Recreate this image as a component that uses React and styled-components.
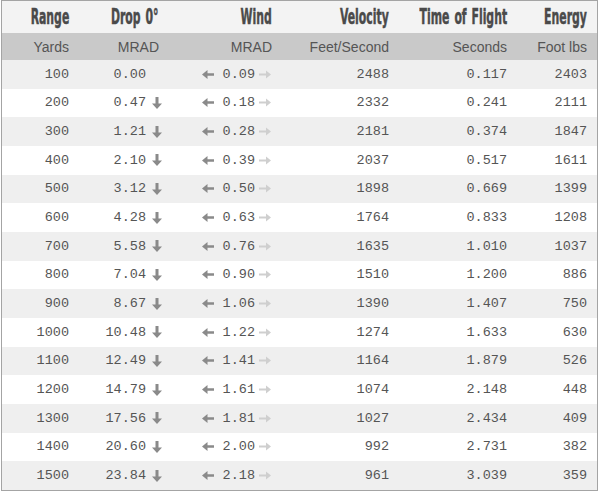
import React from 'react'
import styled, { createGlobalStyle } from 'styled-components'

const rows = [
  [100, '0.00', '0.09', 2488, '0.117', 2403],
  [200, '0.47', '0.18', 2332, '0.241', 2111],
  [300, '1.21', '0.28', 2181, '0.374', 1847],
  [400, '2.10', '0.39', 2037, '0.517', 1611],
  [500, '3.12', '0.50', 1898, '0.669', 1399],
  [600, '4.28', '0.63', 1764, '0.833', 1208],
  [700, '5.58', '0.76', 1635, '1.010', 1037],
  [800, '7.04', '0.90', 1510, '1.200', 886],
  [900, '8.67', '1.06', 1390, '1.407', 750],
  [1000, '10.48', '1.22', 1274, '1.633', 630],
  [1100, '12.49', '1.41', 1164, '1.879', 526],
  [1200, '14.79', '1.61', 1074, '2.148', 448],
  [1300, '17.56', '1.81', 1027, '2.434', 409],
  [1400, '20.60', '2.00', 992, '2.731', 382],
  [1500, '23.84', '2.18', 961, '3.039', 359],
]

const titles = ['Range', 'Drop 0°', 'Wind', 'Velocity', 'Time of Flight', 'Energy']
const units = ['Yards', 'MRAD', 'MRAD', 'Feet/Second', 'Seconds', 'Foot lbs']

function DownArrow() {
  return (
    <svg width="10" height="12" viewBox="0 0 10 12">
      <path d="M3.5 0h3v6.5H10L5 12 0 6.5h3.5z" fill="#8a8a8a" />
    </svg>
  )
}

function LeftArrow() {
  return (
    <svg width="12" height="9" viewBox="0 0 12 9">
      <path d="M12 3.2v2.6H5.5V9L0 4.5 5.5 0v3.2z" fill="#8a8a8a" />
    </svg>
  )
}

function RightArrow() {
  return (
    <svg width="12" height="9" viewBox="0 0 12 9">
      <path d="M0 3.5v2H7V8.5L12 4.5 7 0.5v3z" fill="#cfcfcf" />
    </svg>
  )
}

function App() {
  return (
    <>
      <GlobalStyle />
      <Table>
        <TitleRow>
          {titles.map((t) => (
            <Title key={t}><Squeeze>{t}</Squeeze></Title>
          ))}
        </TitleRow>
        <UnitRow>
          {units.map((u, i) => (
            <Unit key={i}>{u}</Unit>
          ))}
        </UnitRow>
        {rows.map((r, i) => (
          <DataRow key={r[0]} $odd={i % 2 === 0}>
            <Cell>{r[0]}</Cell>
            <DropCell>
              <span>{r[1]}</span>
              <ArrowSlot>{i > 0 && <DownArrow />}</ArrowSlot>
            </DropCell>
            <WindCell>
              <LeftArrow />
              <WindValue>{r[2]}</WindValue>
              <RightArrow />
            </WindCell>
            <Cell>{r[3]}</Cell>
            <Cell>{r[4]}</Cell>
            <Cell>{r[5]}</Cell>
          </DataRow>
        ))}
      </Table>
    </>
  )
}

export default App

const GlobalStyle = createGlobalStyle`
  body {
    margin: 0;
    background: #fff;
  }
`

const Table = styled.div`
  margin-left: 1px;
  width: 595px;
  border: 1px solid #a4a4a4;
  display: flex;
  flex-direction: column;
`

const Columns = styled.div`
  display: grid;
  grid-template-columns: 77px 90px 113px 117px 118px 80px;
  align-items: center;
`

const TitleRow = styled(Columns)`
  height: 32px;
  background: #f3f3f3;
`

const Title = styled.div`
  display: flex;
  justify-content: flex-end;
  min-width: 0;
  padding-right: 10px;
  font-family: "DejaVu Sans Condensed", "Liberation Sans", sans-serif;
  font-weight: bold;
  font-size: 22px;
  color: #4a4a4a;
  white-space: nowrap;
  line-height: 32px;
  word-spacing: 2px;
`

const Squeeze = styled.span`
  flex-shrink: 0;
  display: inline-block;
  transform: scaleX(0.55);
  transform-origin: right center;
  -webkit-text-stroke: 0.5px #4a4a4a;
`

const UnitRow = styled(Columns)`
  height: 27px;
  background: #c9c9c9;
`

const Unit = styled.div`
  text-align: right;
  padding-right: 10px;
  font-family: "Liberation Sans", Arial, sans-serif;
  font-size: 14px;
  color: #555;
`

const DataRow = styled(Columns)`
  height: 28.667px;
  background: ${(p) => (p.$odd ? '#efefef' : '#fff')};
`

const Cell = styled.div`
  text-align: right;
  padding-right: 10px;
  font-family: "Liberation Mono", "Courier New", monospace;
  font-size: 13.5px;
  color: #555;
`

const DropCell = styled(Cell)`
  display: flex;
  justify-content: flex-end;
  align-items: center;
  padding-right: 7px;
`

const ArrowSlot = styled.span`
  display: flex;
  width: 10px;
  margin-left: 6px;
`

const WindCell = styled(Cell)`
  display: flex;
  justify-content: flex-end;
  align-items: center;
  padding-right: 11px;
`

const WindValue = styled.span`
  margin: 0 4px 0 9px;
`
